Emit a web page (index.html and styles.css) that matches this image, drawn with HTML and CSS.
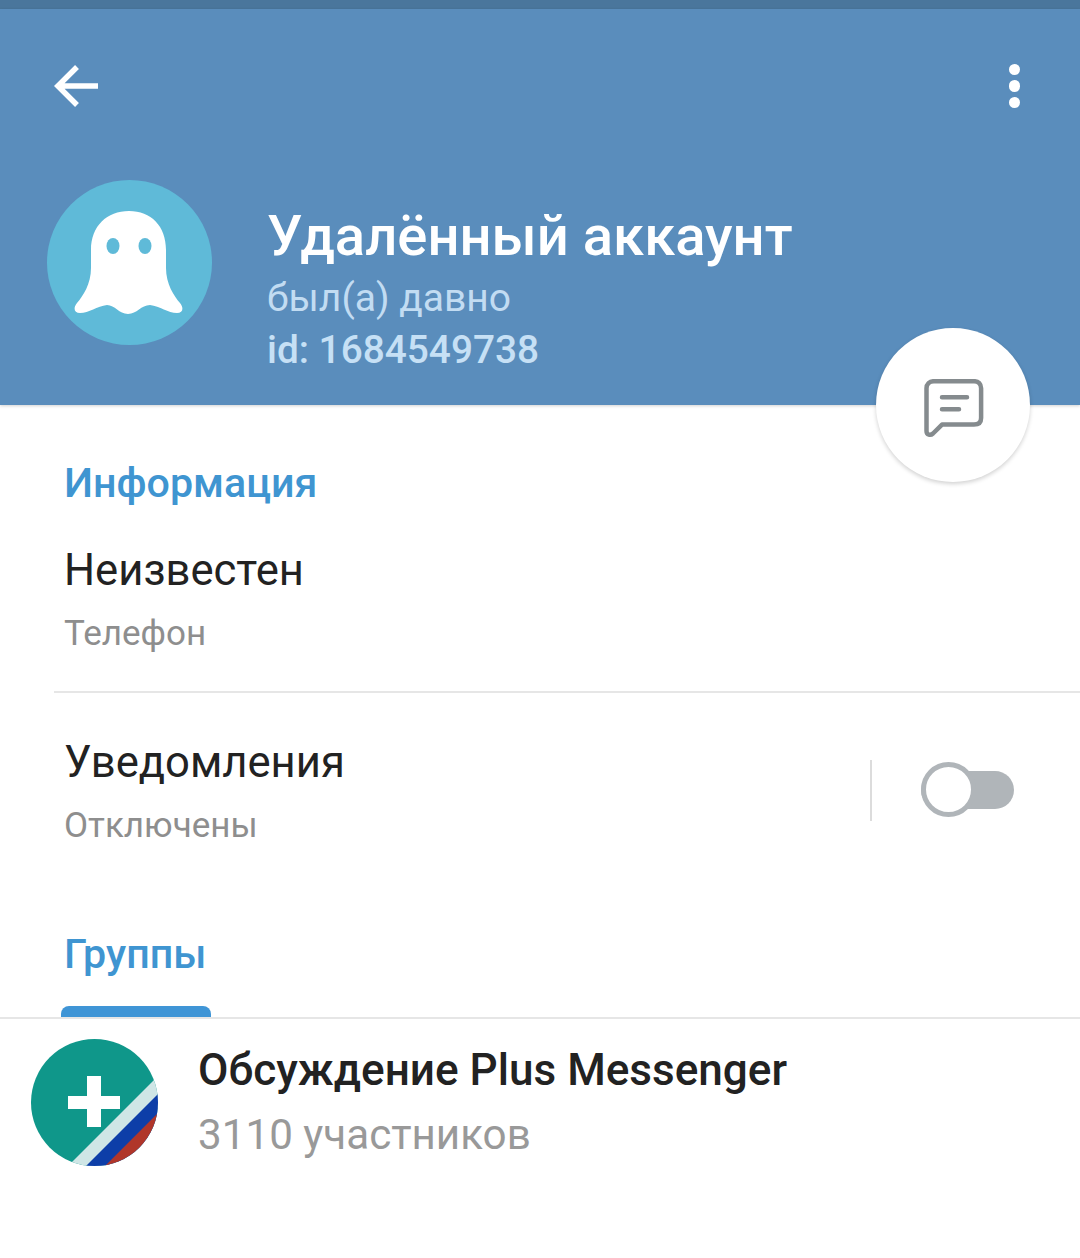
FILE: index.html
```html
<!DOCTYPE html>
<html lang="ru">
<head>
<meta charset="utf-8">
<title>Удалённый аккаунт</title>
<link rel="stylesheet" href="styles.css">
</head>
<body>
<div class="statusbar"></div>
<header class="header">
  <div class="topbar">
    <svg class="back" width="48" height="48" viewBox="0 0 48 48"><path d="M44 24H4M23 5 3.900 24 23 43" fill="none" stroke="#fff" stroke-width="5.500"/></svg>
    <div class="dots"><span></span><span></span><span></span></div>
  </div>
  <div class="profile">
    <svg class="avatar" width="165" height="165" viewBox="0 0 165 165">
      <circle cx="82.500" cy="82.500" r="82.500" fill="#5fbad8"/>
      <path d="M82 31C60 31 44 46 44 70V88C44 104 36 116 30 123C26 128 27 133 33 133C42 133 50 126 60 125C68 125 72 134 81 134C90 134 94 125 103 125C113 126 121 133 130 133C136 133 137 128 133 123C127 116 119 104 119 88V70C119 46 104 31 82 31Z" fill="#fff"/>
      <ellipse cx="66" cy="66" rx="6.500" ry="8" fill="#5fbad8"/>
      <ellipse cx="98" cy="66" rx="6.500" ry="8" fill="#5fbad8"/>
    </svg>
    <div class="identity">
      <div class="name">Удалённый аккаунт</div>
      <div class="seen">был(а) давно</div>
      <div class="uid">id: 1684549738</div>
    </div>
  </div>
  <div class="fab">
    <svg width="60" height="60" viewBox="0 0 60 60"><path d="M10 2.200H50C54.500 2.200 57.100 4.800 57.100 9.300V39C57.100 43.300 54.500 45.600 50 45.600H18L9 54.500C6.500 56.700 2.500 56 2.500 52V9.300C2.500 4.800 5.500 2.200 10 2.200Z" fill="none" stroke="#858b8e" stroke-width="4.500" stroke-linejoin="round"/><path d="M18 18.300H43M18 30.300H35" fill="none" stroke="#858b8e" stroke-width="4.500" stroke-linecap="round"/></svg>
  </div>
</header>
<main>
  <section class="info">
    <h2 class="section-title">Информация</h2>
    <div class="row first">
      <div class="value">Неизвестен</div>
      <div class="label">Телефон</div>
    </div>
    <div class="divider"></div>
    <div class="row notify">
      <div>
        <div class="value">Уведомления</div>
        <div class="label">Отключены</div>
      </div>
      <div class="control">
        <span class="vline"></span>
        <span class="switch"><span class="knob"></span></span>
      </div>
    </div>
  </section>
  <section class="groups">
    <h2 class="section-title">Группы</h2>
    <div class="tab"></div>
    <div class="tabline"></div>
    <div class="group">
      <svg class="group-avatar" width="127" height="127" viewBox="0 0 127 127">
        <defs><clipPath id="c"><circle cx="63.500" cy="63.500" r="63.500"/></clipPath></defs>
        <g clip-path="url(#c)">
          <rect width="127" height="127" fill="#0f978a"/>
          <path d="M37 127 127 37V127Z" fill="#cfe6e6"/>
          <path d="M55 127 127 55V127Z" fill="#0d3ea8"/>
          <path d="M74 127 127 74V127Z" fill="#b0362a"/>
          <path d="M56 37H70V57H89V70H70V88H56V70H37V57H56Z" fill="#fff"/>
        </g>
      </svg>
      <div>
        <div class="group-name">Обсуждение Plus Messenger</div>
        <div class="group-count">3110 участников</div>
      </div>
    </div>
  </section>
</main>
</body>
</html>
```
FILE: styles.css
```css
* { box-sizing: border-box; }
html, body { margin: 0; padding: 0; }
body { width: 1080px; height: 1258px; background: #fff; font-family: Roboto, "Noto Sans", sans-serif; overflow: hidden; }
.statusbar { height: 9px; background: #4a769c; }
.header { position: relative; height: 396px; background: #5a8dbc; padding: 54px 60px 0 47px; box-shadow: 0 1px 3px rgba(0,0,0,.18); }
.topbar { display: flex; justify-content: space-between; align-items: center; height: 46px; }
.back { display: block; margin-left: 7px; }
.dots { display: flex; flex-direction: column; gap: 5px; }
.dots span { width: 11.500px; height: 11.500px; border-radius: 50%; background: #fff; }
.profile { display: flex; align-items: flex-start; margin-top: 71px; }
.avatar { display: block; flex: none; }
.identity { margin-left: 55px; margin-top: 24px; }
.name { font-size: 56.200px; line-height: 64px; font-weight: 500; color: #fff; white-space: nowrap; }
.seen { font-size: 39px; line-height: 44px; color: #c2dcf2; margin-top: 8px; }
.uid { font-size: 38.800px; line-height: 44px; font-weight: 500; color: #c6e0f5; margin-top: 8px; }
.fab { position: absolute; left: 876px; top: 319px; width: 154px; height: 154px; border-radius: 50%; background: #fff; box-shadow: 0 2px 4px rgba(0,0,0,.18); display: flex; align-items: center; justify-content: center; padding: 8px 0 0 2px; }
main { padding-top: 54px; }
.section-title { margin: 0; font-size: 41.200px; line-height: 48px; font-weight: 500; color: #3f95d1; padding-left: 64px; }
.row { padding-left: 64px; }
.first { height: 184px; padding-top: 37px; }
.value { font-size: 43.600px; line-height: 54px; color: #222; }
.label { font-size: 35px; line-height: 44px; color: #8e8e8e; margin-top: 14px; }
.divider { height: 2px; background: #e6e6e6; margin-left: 54px; }
.notify { display: flex; justify-content: space-between; padding-top: 43px; padding-right: 66px; height: 237px; }
.control { display: flex; align-items: flex-start; padding-top: 24px; }
.vline { width: 2px; height: 61px; background: #dcdcdc; margin-right: 49px; }
.switch { position: relative; display: block; width: 93px; height: 38px; margin-top: 11px; border-radius: 19px; background: #b0b5b9; }
.knob { position: absolute; left: 0; top: -9px; width: 55px; height: 55px; border-radius: 50%; background: #fff; border: 5px solid #b0b5b9; }
.tab { width: 150px; height: 11px; margin: 28px 0 0 61px; background: #3f95d6; border-radius: 8px 8px 0 0; }
.tabline { height: 2px; background: #e6e6e6; }
.group { display: flex; align-items: flex-start; padding: 20px 0 0 31px; }
.group-avatar { display: block; flex: none; margin-right: 40px; }
.group-name { font-size: 44.100px; line-height: 54px; font-weight: 500; color: #222; margin-top: 4px; white-space: nowrap; }
.group-count { font-size: 42.200px; line-height: 54px; color: #999; margin-top: 11px; white-space: nowrap; }
```
